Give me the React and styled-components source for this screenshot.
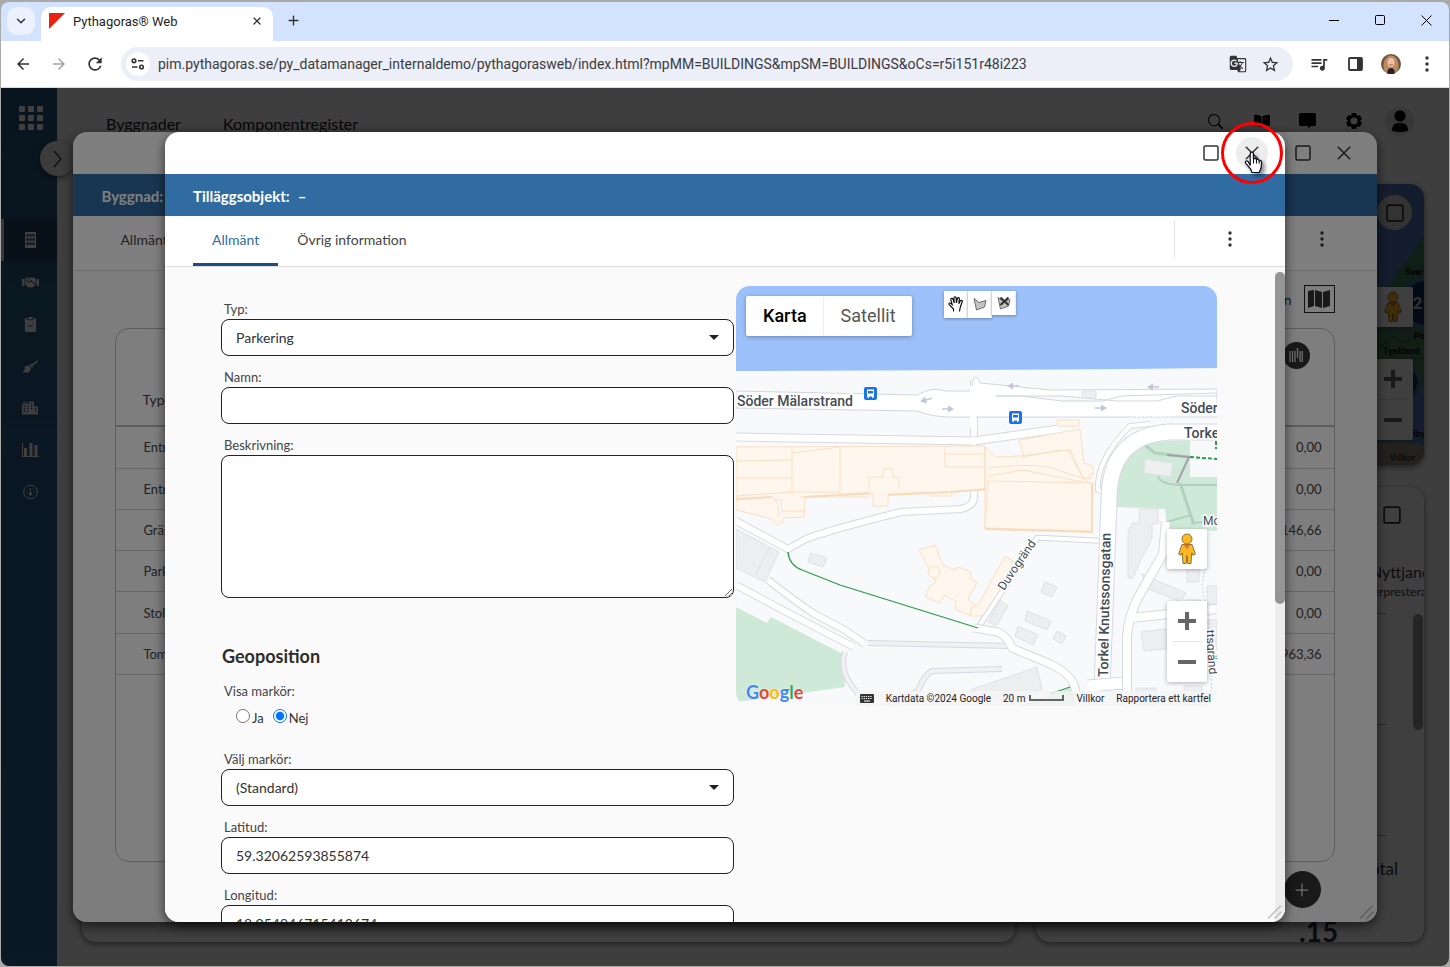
import { useState } from 'react';
import styled, { createGlobalStyle, css } from 'styled-components';
import { BsSearch, BsClipboard2CheckFill } from 'react-icons/bs';
import { FaBookOpen, FaBroom, FaCity, FaHandshake } from 'react-icons/fa';
import {
  MdArrowBack,
  MdArrowForward,
  MdGTranslate,
  MdQueueMusic,
  MdRefresh,
  MdStarBorder,
} from 'react-icons/md';
import { ChevronDown, Plus, X } from 'lucide-react';

const rows = [
  { type: 'Entré', amount: '0,00' },
  { type: 'Entré', amount: '0,00' },
  { type: 'Gräsmatta', amount: '2 146,66' },
  { type: 'Parkering', amount: '0,00' },
  { type: 'Stolpe', amount: '0,00' },
  { type: 'Tomt', amount: '4 963,36' },
];

const SquareIcon = ({ size = 16 }) => (
  <svg width={size} height={size} viewBox='0 0 16 16' fill='none' stroke='currentColor' strokeWidth='1.5'>
    <rect x='1' y='1' width='14' height='14' rx='1.5' />
  </svg>
);

const DotsIcon = () => (
  <svg width='4' height='16' viewBox='0 0 4 16' fill='currentColor'>
    <circle cx='2' cy='2' r='1.7' />
    <circle cx='2' cy='8' r='1.7' />
    <circle cx='2' cy='14' r='1.7' />
  </svg>
);

const CloseIcon = () => (
  <svg width='14' height='14' viewBox='0 0 14 14' fill='none' stroke='currentColor' strokeWidth='1.5'>
    <path d='M.8.8l12.4 12.4M13.2.8.8 13.2' />
  </svg>
);

const GearIcon = () => (
  <svg width='18' height='18' viewBox='0 0 18 18' fill='currentColor'>
    {[0, 60, 120].map((angle) => (
      <rect key={angle} x='6.500' y='1' width='5' height='16' rx='1' transform={`rotate(${angle} 9 9)`} />
    ))}
    <circle cx='9' cy='9' r='6.500' />
    <circle cx='9' cy='9' r='3.600' fill='#fafafa' />
  </svg>
);

const ChatIcon = () => (
  <svg width='18' height='16' viewBox='0 0 18 16' fill='currentColor'>
    <path d='M1.500 0h14q1.500 0 1.500 1.500v10q0 1.500-1.500 1.500h-3.500L9 15.500V13H1.500Q0 13 0 11.500v-10Q0 0 1.500 0z' />
  </svg>
);

const KeyboardIcon = () => (
  <svg width='14' height='9' viewBox='0 0 14 9'>
    <rect width='14' height='9' rx='1' fill='#333' />
    <path d='M1.500 2.500h11M1.500 4.500h11' stroke='#fff' strokeDasharray='1.200 1' />
    <path d='M4 7h6' stroke='#fff' />
  </svg>
);

const Grip = () => (
  <GripCorner width='14' height='14' viewBox='0 0 14 14' fill='none' stroke='#bdbdbd' strokeWidth='1.5'>
    <path d='M.5 13 12.5 1M7 13l6-6' strokeLinecap='round' />
  </GripCorner>
);

const Pegman = () => (
  <svg width='18' height='32' viewBox='0 0 18 32' stroke='#6d5b2c' strokeWidth='.8'>
    <path
      d='M4 11.5h10l3.4 9.5-2.4 1.2-1.2-2.2-.8 10.5H9.8L9 22.500l-.8 8H5L4.200 20 3 22.200.6 21z'
      fill='#fdb924'
    />
    <path d='M5.500 11.500h7L9 16.500z' fill='#e5752b' stroke='none' />
    <circle cx='9' cy='6' r='5' fill='#fdb924' />
  </svg>
);

const ZoomControl = () => (
  <ZoomBox>
    <ZoomButton aria-label='Zooma in'>
      <svg width='18' height='18' viewBox='0 0 18 18' fill='currentColor'>
        <path d='M7 0h4v7h7v4h-7v7H7v-7H0V7h7z' />
      </svg>
    </ZoomButton>
    <ZoomButton aria-label='Zooma ut'>
      <svg width='18' height='18' viewBox='0 0 18 18' fill='currentColor'>
        <path d='M0 7h18v4H0z' />
      </svg>
    </ZoomButton>
  </ZoomBox>
);

const BrowserChrome = () => (
  <>
    <TabStrip>
      <TabSearch aria-label='Sök bland flikar'>
        <ChevronDown size={14} strokeWidth={2.5} />
      </TabSearch>
      <BrowserTab>
        <svg width='16' height='16' viewBox='0 0 16 16'>
          <path d='M0 0h16L0 16z' fill='#ec2211' />
        </svg>
        <TabTitle>Pythagoras® Web</TabTitle>
        <ChromeButton $size={16} aria-label='Stäng flik'>
          <X size={12} strokeWidth={2.6} />
        </ChromeButton>
      </BrowserTab>
      <ChromeButton $size={28} aria-label='Ny flik'>
        <Plus size={15} strokeWidth={2.2} />
      </ChromeButton>
      <WindowButtons>
        <ChromeButton $size={46} aria-label='Minimera'>
          <svg width='10' height='10' stroke='#000'>
            <path d='M0 4.500h10' />
          </svg>
        </ChromeButton>
        <ChromeButton $size={46} aria-label='Maximera'>
          <svg width='11' height='11' stroke='#000' fill='none'>
            <rect x='.5' y='.5' width='9' height='9' rx='1' />
          </svg>
        </ChromeButton>
        <ChromeButton $size={46} aria-label='Stäng'>
          <svg width='11' height='11' stroke='#000'>
            <path d='M.5.5l10 10M10.500.5l-10 10' />
          </svg>
        </ChromeButton>
      </WindowButtons>
    </TabStrip>
    <AddressRow>
      <ChromeButton $size={36} aria-label='Tillbaka'>
        <MdArrowBack size={18} />
      </ChromeButton>
      <ChromeButton $size={36} $muted aria-label='Framåt'>
        <MdArrowForward size={18} />
      </ChromeButton>
      <ChromeButton $size={36} aria-label='Läs in igen'>
        <MdRefresh size={20} />
      </ChromeButton>
      <Omnibox>
        <SiteInfo aria-label='Webbplatsinformation'>
          <svg width='14' height='12' viewBox='0 0 14 12' fill='none' stroke='#333' strokeWidth='1.6'>
            <circle cx='3' cy='2.800' r='1.800' />
            <path d='M7 2.800h5.500M1 9h5.500' />
            <circle cx='10.500' cy='9' r='1.800' />
          </svg>
        </SiteInfo>
        <Url
          aria-label='Adressfält'
          defaultValue='pim.pythagoras.se/py_datamanager_internaldemo/pythagorasweb/index.html?mpMM=BUILDINGS&mpSM=BUILDINGS&oCs=r5i151r48i223'
        />
        <ChromeButton $size={32} aria-label='Översätt'>
          <MdGTranslate size={18} />
        </ChromeButton>
        <ChromeButton $size={32} aria-label='Bokmärk'>
          <MdStarBorder size={19} />
        </ChromeButton>
      </Omnibox>
      <ChromeButton $size={36} aria-label='Media'>
        <MdQueueMusic size={20} />
      </ChromeButton>
      <ChromeButton $size={36} aria-label='Sidopanel'>
        <svg width='15' height='14' viewBox='0 0 15 14'>
          <rect x='1' y='1' width='13' height='12' rx='1' fill='none' stroke='#333' strokeWidth='1.8' />
          <path d='M9 1h5v12H9z' fill='#333' />
        </svg>
      </ChromeButton>
      <ChromeButton $size={36} aria-label='Profil'>
        <svg width='20' height='20' viewBox='0 0 20 20'>
          <circle cx='10' cy='10' r='10' fill='#6f553f' />
          <path d='M3 16C1 8 5 1.500 10 1.500S19 8 17 16l-3 3H6z' fill='#b98d63' />
          <ellipse cx='10' cy='8.500' rx='3.400' ry='4.600' fill='#efc0a6' />
          <path d='M6.500 20q-1-6 3.500-6 4.500 0 3.500 6z' fill='#2b2225' />
          <path d='M8.300 10.500q1.700 1.400 3.400 0' stroke='#a85850' fill='none' />
        </svg>
      </ChromeButton>
      <ChromeButton $size={36} aria-label='Meny'>
        <DotsIcon />
      </ChromeButton>
    </AddressRow>
  </>
);

const SideMenu = () => (
  <Sidebar>
    <AppsButton aria-label='Appar'>
      <svg width='24' height='24' viewBox='0 0 24 24' fill='currentColor'>
        {[0, 9, 18].map((y) =>
          [0, 9, 18].map((x) => <rect key={`${x}-${y}`} x={x} y={y} width='6' height='6' rx='1' />)
        )}
      </svg>
    </AppsButton>
    <SideItem $active aria-label='Byggnader'>
      <svg width='11' height='16' viewBox='0 0 11 16' fill='currentColor'>
        <path
          fillRule='evenodd'
          d='M0 0h11v16H0zM1.500 2v2.500h2V2zm3 0v2.500h2V2zm3 0v2.500h2V2zm-6 4.300v2.500h2V6.300zm3 0v2.500h2V6.300zm3 0v2.500h2V6.300zm-6 4.200V13h2v-2.500zm3 0V13h2v-2.500zm3 0V13h2v-2.500z'
        />
      </svg>
    </SideItem>
    <SideItem aria-label='Avtal'>
      <FaHandshake size={17} />
    </SideItem>
    <SideItem aria-label='Uppgifter'>
      <BsClipboard2CheckFill size={15} />
    </SideItem>
    <SideItem aria-label='Städning'>
      <FaBroom size={15} />
    </SideItem>
    <SideItem aria-label='Fastigheter'>
      <FaCity size={16} />
    </SideItem>
    <SideItem aria-label='Statistik'>
      <svg width='17' height='14' viewBox='0 0 17 14' fill='currentColor'>
        <path d='M0 0h1v13h16v1H0zM2 5h3v8H2zM7.500 0h3v13h-3zM12.500 2h3v11h-3z' />
      </svg>
    </SideItem>
    <SideItem aria-label='Mätare'>
      <svg width='15' height='16' viewBox='0 0 15 16' fill='none' stroke='currentColor'>
        <circle cx='7.500' cy='8' r='6.800' />
        <path d='M7.500 4v6M3.500 8h1M10.500 8h1M4.500 5l.8.8M10.500 5l-.8.8' />
        <circle cx='7.500' cy='10' r='1.200' fill='currentColor' />
      </svg>
    </SideItem>
  </Sidebar>
);

const OverviewMap = () => (
  <OverviewCard>
    <OverviewDrawing viewBox='1036 184 388 281' preserveAspectRatio='xMaxYMin slice'>
      <path d='M1036 184h388v281h-388z' fill='#5277b8' />
      <path d='M1424 236l-8 8-8 16-10 10-8 14-16 10v60h50z' fill='#3f7a5c' />
      <path d='M1370 335l20-12 34 4v56l-20 32-10-16-24-6z' fill='#45785b' />
      <path d='M1370 443l30-2 24 4v20h-54z' fill='#8a8478' />
      <path d='M1380 346l14-9 10 6 20-12' fill='none' stroke='#234638' />
      <circle cx='1426' cy='303' r='24' fill='#0e3158' stroke='#3e6ca6' strokeWidth='4' />
      <circle cx='1404' cy='382' r='15' fill='#0e3158' stroke='#3e6ca6' strokeWidth='3' />
      <g fontFamily='Roboto, sans-serif' fontSize='9' fontWeight='700' fill='#0a0a0a'>
        <text x='1405' y='275'>Sver</text>
        <text x='1414' y='339'>Po</text>
        <text x='1383' y='354'>Tyskland</text>
        <text x='1408' y='437'>Liby</text>
      </g>
      <text x='1413' y='309' fontFamily='Roboto, sans-serif' fontSize='16' fontWeight='700' fill='#ccc'>2</text>
      <text x='1390' y='461' fontFamily='Roboto, sans-serif' fontSize='9' fill='#111'>Villkor</text>
    </OverviewDrawing>
    <RoundExpand aria-label='Maximera karta'>
      <SquareIcon size={18} />
    </RoundExpand>
    <OverviewControls>
      <PegButton aria-label='Street View'>
        <Pegman />
      </PegButton>
      <ZoomControl />
    </OverviewControls>
  </OverviewCard>
);

// casing first, then the white surface on top
const Road = ({ d, w = 7, fill = '#fff' }) => (
  <g fill='none' strokeLinejoin='round'>
    <path d={d} stroke='#d6d9e0' strokeWidth={w + 2} />
    <path d={d} stroke={fill} strokeWidth={w} />
  </g>
);

const BusStop = ({ x, y }) => (
  <g transform={`translate(${x} ${y})`}>
    <rect width='13' height='13' rx='2' fill='#1a73e8' />
    <path fillRule='evenodd' d='M3 2.500h7v7H9.500V11H8V9.500H5V11H3.500V9.500H3zM4 4v2.500h5V4z' fill='#fff' />
  </g>
);

const Arrow = ({ x, y, flip, angle = 0 }) => (
  <path
    transform={`translate(${x} ${y}) rotate(${angle}) scale(${flip ? -1 : 1} 1)`}
    d='M-6-.7h6V-3.500L6 0 0 3.500V.7h-6z'
    fill='#c3c6db'
  />
);

const StreetMap = () => (
  <MapDrawing viewBox='736 286 481 420' preserveAspectRatio='xMinYMin slice'>
    <path d='M736 286h481v420H736z' fill='#f8f9fb' />
    <path d='M736 286h481v82l-90 1-150 1-241 1z' fill='#9cc0f9' />

    <path d='M1117 507v-22q2-30 36-43l37-2v36l27 1v54l-50-2-2-20z' fill='#cfe9d8' />
    <path d='M1158 557l12-14v19zM1190 440h27v37h-27z' fill='#f8f9fb' />
    <path d='M736 607l31 16 4-6 72 37 2 33-109 15z' fill='#cfe9d8' />
    <path d='M1020 706l50-18 10-2-8 20z' fill='#cfe9d8' />

    <Road d='M736 521l52 28 18-10q20-8 95-27l60-3q14-3 13-14V380' w={6} />
    <Road d='M736 437l238 4 85-12' w={7} />
    <path d='M970 441h6' stroke='#fff' strokeWidth='7' />

    <g fill='#fff6ed' stroke='#fbdfc4'>
      <path d='M736 447l249-1 1 43-34 3v4h-22v-4l-42 2v12h-15v-12l-68 3-1 20h-22l-1-17-45-2z' />
      <path d='M736 500l36-3 6 7v12l5-5h21v6l-21 1v4l-6 3-5-6-36-9z' />
      <path d='M1019 440l61-11 4 34 9 3v8l-9 6-14-30-46 6z' />
      <path d='M985 447l11 10 24-1 48-6 16 30 9 4-1 48-107-3z' />
      <path d='M988 481l105 2-1 48-107-3z' />
      <path d='M919 550l16-5 8 20 12 5 3-3 13 5-1 6 7 5-9 16 9 8-8 8-14-6 1-8-12-6-4 8-15-6 5-11 6-4z' />
      <path d='M1005 556l8 5-22 50-9 5-12 0 1-8 7-3z' />
      <circle cx='934' cy='572' r='6' />
      <path d='M1057 420h22v6h-22z' />
    </g>
    <g fill='none' stroke='#fbdfc4'>
      <path d='M736 461l56-1M792 447v44M792 453l48-6M840 447v48M792 492l-56 4M945 447v20h40M945 454h40M985 447v42M736 478h56M788 492h52M869 489v-12h14v-8h10v8h6v12M800 497h70M940 492l46-2' />
      <path d='M988 468q50-6 70 2t34 9M988 476l35-6 60 12M1022 457l38-7' />
    </g>
    <path d='M736 499l36-2M804 497l66-4M888 495l64-3 34-3M985 529l107 3v-48' fill='none' stroke='#f7dcbc' strokeWidth='2' />

    <g fill='#edeef0' stroke='#dfe0e4'>
      <path d='M736 529l43 23-14 30-29-14zM770 547l-14 27' />
      <path d='M811 553l16 5-4 9-15-5zM1045 582l12 5-5 10-11-5zM1027 611l24 10-4 9-22-9zM1018 626l20 9-5 10-18-9zM1057 631l9 5-4 8-9-5zM1000 600l8 6-12 20-8-4z' />
      <path d='M1139 509h19v14l-6 1v14l-3 7-7 12-9 21h-5v-46l4-9h7zM1142 574l44 19-5 9h-4v-2l-32-12zM1187 569h12v13h-12zM1186 600h15v14h-15zM1207 586h10v18h-10zM1141 632l32-4v20l-29 3zM1208 620h9v30h-9z' />
      <path d='M1145 459l28 4-2 14-27-4zM970 690l67-23 5 22-40 12h-32zM1136 688h20v18h-20zM1184 686h18v20h-18z' />
    </g>
    <g fill='none' stroke='#b0d1be' strokeWidth='3'>
      <path d='M1137 439l18 14 35 4M1180 483l14 42' />
      <path d='M1158 476q2 8 20 9h39M1167 522l24-7M1191 523l15-1' strokeWidth='2' />
    </g>
    <path d='M1167 455l22 2-12 26' fill='none' stroke='#a79fac' strokeWidth='2' />

    <Road d='M868 643L1010 646M845 652Q836 678 872 706M890 704l28-13q6-16 14-20l70-2' w={4} fill='#f0f1f4' />
    <Road d='M736 585l56 30 62 32M768 580q28 22 48 35l29 15 20 14' w={6} />
    <Road d='M978 628l59-90h8l60 3' w={4} />
    <Road d='M974 628l24 4q10 5 14 16l36 15q22 10 26 22l6 21' w={7} />
    <Road d='M1127 706v-70q2-22 12-40l24-42 3-32M1131 618l86-9' w={8} />
    <Road d='M1150 424l-20 2q-34 34-32 64l6 2' w={4} />
    <Road d='M1217 432h-48q-60 4-60 68l-7 190' w={15} />
    <Road d='M1088 686l34-3' w={11} />
    <path
      d='M736 391l181 4q16-9 28-4l27 0 1-11q3-6 6 0l1 3 70 7 167-1v7l-40 0-20 5h-40l-55-5h-66 25l41 5h40l20-5 95-3v24H960q-26 1-43-6l-181-3z'
      fill='#fff'
      stroke='#d3d6df'
    />
    <path d='M973 386v42' stroke='#fff' strokeWidth='6' />
    <path d='M1082 391h14v7h-14z' fill='#edeef0' stroke='#dfe0e4' />
    <path d='M1206 568q-8 20 2 40l4 90' fill='none' stroke='#c9ccd2' strokeDasharray='2 2' />
    <path d='M1132 416h38' stroke='#fff' strokeWidth='2' strokeDasharray='2 2' />

    <g fill='none' stroke='#2a9b4a' strokeWidth='1.300'>
      <path d='M788 552q1 13 14 18l38 15 138 43' />
      <path d='M1190 457l27 2M1216 441v8' strokeDasharray='4 2' strokeWidth='2' />
      <path d='M1050 694l20-7' />
    </g>
    <Arrow x={926} y={400} flip angle={-15} />
    <Arrow x={948} y={409} />
    <Arrow x={1013} y={386} flip />
    <Arrow x={1153} y={387} flip />
    <Arrow x={1101} y={408} />
    <BusStop x={864} y={387} />
    <BusStop x={1009} y={411} />

    <g
      fontFamily='Roboto, sans-serif'
      fontSize='14'
      fontWeight='500'
      fill='#454c55'
      stroke='#fff'
      strokeWidth='3'
      paintOrder='stroke'
    >
      <text x='737' y='406'>Söder Mälarstrand</text>
      <text x='1181' y='413'>Söder</text>
      <text x='1184' y='438'>Torke</text>
      <text transform='translate(1108 677) rotate(-89)'>Torkel Knutssonsgatan</text>
      <text transform='translate(1004 591) rotate(-56)' fontSize='12' fontWeight='400'>Duvogränd</text>
      <text transform='translate(1206 630) rotate(86)' fontSize='12' fontWeight='400'>ttsgränd</text>
      <text x='1203' y='525' fontSize='12' fontWeight='400'>Mo</text>
    </g>
  </MapDrawing>
);

const LocationMap = () => (
  <MapPanel>
    <StreetMap />
    <MapTypes>
      <MapType $active>Karta</MapType>
      <MapType>Satellit</MapType>
    </MapTypes>
    <DrawTools>
      <DrawTool aria-label='Panorera'>
        <svg width='16' height='16' viewBox='0 0 16 16' fill='#fff' stroke='#000' strokeWidth='1.100'>
          <path d='M5.500 15.500V13L1.200 8.600C.2 7.200 1.800 6.400 3 7.600l1.200 1L2.800 3.600C2.600 2 4.400 1.700 5 3.200L6.200 7 6 1.900C6 .4 8 .3 8.100 1.800L8.400 7l1-4.600c.4-1.300 2.200-1 2 .5l-.6 4.700 1.700-2.800c.8-1.100 2.300-.3 1.700 1L12.200 11.500 11.500 15.500' />
        </svg>
      </DrawTool>
      <DrawTool aria-label='Rita yta'>
        <svg width='14' height='14' viewBox='0 0 14 14' fill='#c4c4c4' stroke='#6b6b6b'>
          <path d='M1 1.500l5 4 7-2-1.500 6.500-8 3z' />
        </svg>
      </DrawTool>
      <DrawTool $short aria-label='Ta bort yta'>
        <svg width='14' height='14' viewBox='0 0 14 14' fill='#c4c4c4' stroke='#6b6b6b'>
          <path d='M1 1.500l5 4 7-2-1.500 6.500-8 3z' />
          <path d='M3.500 1.500l8 7.500M11.500 1.500l-8 7.500' stroke='#333' strokeWidth='2.200' />
        </svg>
      </DrawTool>
    </DrawTools>
    <MapControls>
      <PegButton aria-label='Street View'>
        <Pegman />
      </PegButton>
      <ZoomControl />
    </MapControls>
    <GoogleMark href='#google' aria-label='Google'>
      <Letter $color='#4285f4'>G</Letter>
      <Letter $color='#ea4335'>o</Letter>
      <Letter $color='#fbbc04'>o</Letter>
      <Letter $color='#4285f4'>g</Letter>
      <Letter $color='#34a853'>l</Letter>
      <Letter $color='#ea4335'>e</Letter>
    </GoogleMark>
    <Attribution>
      <KeyboardIcon />
      <span>Kartdata ©2024 Google</span>
      <Scale>
        20 m <ScaleBar />
      </Scale>
      <MapLink href='#villkor'>Villkor</MapLink>
      <MapLink href='#kartfel'>Rapportera ett kartfel</MapLink>
    </Attribution>
  </MapPanel>
);

const TextField = ({ id, label, value }) => (
  <>
    <Label htmlFor={id}>{label}</Label>
    <Input id={id} defaultValue={value} />
  </>
);

const SelectField = ({ id, label, value }) => (
  <>
    <Label htmlFor={id}>{label}</Label>
    <SelectWrap>
      <Select id={id} defaultValue={value}>
        <option>{value}</option>
      </Select>
      <Caret width='10' height='5' viewBox='0 0 10 5'>
        <path d='M0 0h10L5 5z' fill='#222' />
      </Caret>
    </SelectWrap>
  </>
);

const ObjectForm = () => {
  const [marker, setMarker] = useState('nej');

  return (
    <Form>
      <SelectField id='typ' label='Typ:' value='Parkering' />
      <TextField id='namn' label='Namn:' value='' />
      <Label htmlFor='beskrivning'>Beskrivning:</Label>
      <TextArea id='beskrivning' />
      <SectionTitle>Geoposition</SectionTitle>
      <Label as='div'>Visa markör:</Label>
      <RadioRow>
        <RadioLabel>
          <Radio name='marker' checked={marker === 'ja'} onChange={() => setMarker('ja')} />
          Ja
        </RadioLabel>
        <RadioLabel>
          <Radio name='marker' checked={marker === 'nej'} onChange={() => setMarker('nej')} />
          Nej
        </RadioLabel>
      </RadioRow>
      <SelectField id='markor' label='Välj markör:' value='(Standard)' />
      <TextField id='lat' label='Latitud:' value='59.32062593855874' />
      <TextField id='long' label='Longitud:' value='18.054946715412674' />
    </Form>
  );
};

const BuildingDialog = () => (
  <Dialog $width='90%'>
    <TitleBar>
      <IconButton aria-label='Maximera'>
        <SquareIcon />
      </IconButton>
      <IconButton aria-label='Stäng'>
        <CloseIcon />
      </IconButton>
    </TitleBar>
    <DialogHeading>Byggnad:</DialogHeading>
    <DialogTabs $tall>
      <DialogTab>Allmänt</DialogTab>
      <MoreButton aria-label='Fler val'>
        <DotsIcon />
      </MoreButton>
    </DialogTabs>
    <TableBody>
      <TableTools>
        Visa tilläggsobjekt på kartan
        <MapToggle aria-label='Karta'>
          <svg width='22' height='18' viewBox='0 0 22 18' fill='currentColor'>
            <path d='M0 1l6-1v16l-6 2zM7 0l7 2v16l-7-2zM15 2l7-2v16l-7 2z' />
          </svg>
        </MapToggle>
      </TableTools>
      <TableCard>
        <ColumnsButton aria-label='Kolumner'>
          <svg width='14' height='16' viewBox='0 0 14 16' stroke='currentColor' strokeWidth='1.300'>
            <path d='M1 4v11M3.500 4v11M6 4v11M8.500 1v10M11 4v11M13.200 4v11' />
          </svg>
        </ColumnsButton>
        <Table>
          <thead>
            <tr>
              <Th>Typ</Th>
              <Th />
            </tr>
          </thead>
          <tbody>
            {rows.map((row, i) => (
              <tr key={i}>
                <Td>{row.type}</Td>
                <Td $right>{row.amount}</Td>
              </tr>
            ))}
          </tbody>
        </Table>
      </TableCard>
      <AddButton aria-label='Lägg till'>
        <Plus size={20} strokeWidth={1.5} />
      </AddButton>
    </TableBody>
    <Grip />
  </Dialog>
);

const ObjectDialog = () => (
  <Dialog $width='calc(100% - 328px)'>
    <TitleBar>
      <IconButton aria-label='Maximera'>
        <SquareIcon />
      </IconButton>
      <CloseSpot>
        <IconButton $hovered aria-label='Stäng'>
          <CloseIcon />
        </IconButton>
        <Highlight />
        <Pointer width='24' height='28' viewBox='0 0 24 28'>
          <path
            d='M6.200 14.500V3c0-2.400 3.200-2.400 3.200 0v5.200c.6-1.200 2.800-1 3 .6.900-1 2.700-.6 2.800 1 1-.8 2.600 0 2.400 1.800l-.6 5.400-1.800 4.500H8l-1.500-3.600-4.700-5.400c-1.400-2 .8-3.600 2.400-1.800z'
            fill='#fff'
            stroke='#0b0b1c'
            strokeWidth='1.200'
          />
          <path d='M9.500 8v4.500M12.500 8.800v3.700M15.200 9.800v3' stroke='#0b0b1c' />
        </Pointer>
      </CloseSpot>
    </TitleBar>
    <DialogHeading>
      Tilläggsobjekt: <span>–</span>
    </DialogHeading>
    <DialogTabs>
      <DialogTab $active>Allmänt</DialogTab>
      <DialogTab>Övrig information</DialogTab>
      <MoreButton $divided aria-label='Fler val'>
        <DotsIcon />
      </MoreButton>
    </DialogTabs>
    <FormBody>
      <ObjectForm />
      <LocationMap />
      <ScrollTrack>
        <ScrollThumb $share={51} />
      </ScrollTrack>
    </FormBody>
    <Grip />
  </Dialog>
);

const App = () => (
  <BrowserWindow>
    <GlobalStyle />
    <BrowserChrome />
    <Viewport>
      <SideMenu />
      <PageColumn>
        <PageHeader>
          <PageLink href='#byggnader'>Byggnader</PageLink>
          <PageLink href='#komponenter'>Komponentregister</PageLink>
          <HeaderIcons>
            <HeaderButton aria-label='Sök'>
              <BsSearch size={15} />
            </HeaderButton>
            <HeaderButton aria-label='Handbok'>
              <FaBookOpen size={16} />
            </HeaderButton>
            <HeaderButton aria-label='Meddelanden'>
              <ChatIcon />
            </HeaderButton>
            <HeaderButton aria-label='Inställningar'>
              <GearIcon />
            </HeaderButton>
            <HeaderButton $round aria-label='Konto'>
              <svg width='16' height='22' viewBox='0 0 16 22' fill='currentColor'>
                <circle cx='8' cy='6' r='5.700' />
                <path d='M0 21q0-9 8-8 8-1 8 8-8 2-16 0z' />
              </svg>
            </HeaderButton>
          </HeaderIcons>
        </PageHeader>
        <Dashboard>
          <Card />
          <SideCards>
            <OverviewMap />
            <FactsCard>
              <FactsExpand aria-label='Maximera'>
                <SquareIcon size={18} />
              </FactsExpand>
              <FactTitle>Nyttjande</FactTitle>
              <FactNote>perpresterad</FactNote>
              <FactRow />
              <FactRow />
              <FactRow>Total</FactRow>
              <FactTotal>.15</FactTotal>
              <FactsScroll />
            </FactsCard>
          </SideCards>
        </Dashboard>
      </PageColumn>
      <ExpandButton aria-label='Visa meny'>
        <svg width='9' height='18' viewBox='0 0 9 18' fill='none' stroke='currentColor' strokeWidth='1.200'>
          <path d='M1 1l7 8-7 8' />
        </svg>
      </ExpandButton>
      <Backdrop>
        <BuildingDialog />
      </Backdrop>
      <Backdrop>
        <ObjectDialog />
      </Backdrop>
    </Viewport>
  </BrowserWindow>
);

export default App;

const uiFont = `'Lato', 'Open Sans', sans-serif`;

const GlobalStyle = createGlobalStyle`
  *, *::before, *::after {
    box-sizing: border-box;
  }

  body {
    margin: 0;
    background: #a9aaa8;
    font-family: ${uiFont};
    font-size: 14px;
    color: #333;
  }

  button {
    display: flex;
    align-items: center;
    justify-content: center;
    padding: 0;
    border: 0;
    background: none;
    color: inherit;
    font: inherit;
    cursor: pointer;
  }

  a {
    color: inherit;
    text-decoration: none;
  }

  svg {
    flex: none;
  }
`;

const BrowserWindow = styled.div`
  display: flex;
  flex-direction: column;
  height: 100vh;
  padding: 2px 1px 1px;
`;

const TabStrip = styled.div`
  display: flex;
  align-items: center;
  flex: none;
  height: 39px;
  padding: 0 0 2px 6px;
  border-radius: 8px 8px 0 0;
  background: #d3e2fd;
`;

const ChromeButton = styled.button`
  flex: none;
  width: ${({ $size }) => $size}px;
  height: ${({ $size }) => Math.min($size, 36)}px;
  color: ${({ $muted }) => ($muted ? '#a3a5a8' : '#333')};
`;

const TabSearch = styled(ChromeButton).attrs({ $size: 28 })`
  border-radius: 10px;
  background: #ebf1fe;
`;

const BrowserTab = styled.div`
  display: flex;
  align-items: center;
  align-self: flex-end;
  width: 232px;
  height: 34px;
  margin: 0 6px -2px;
  padding: 0 8px 6px;
  border-radius: 10px 10px 0 0;
  background: #fff;
`;

const TabTitle = styled.span`
  flex: 1;
  margin-left: 8px;
  font-family: Roboto, sans-serif;
  font-size: 13px;
  color: #1f1f1f;
`;

const WindowButtons = styled.div`
  display: flex;
  margin-left: auto;
`;

const AddressRow = styled.div`
  display: flex;
  align-items: center;
  flex: none;
  height: 47px;
  padding: 0 4px;
  border-bottom: 1px solid #dcdcdc;
  background: #fff;
`;

const Omnibox = styled.div`
  display: flex;
  align-items: center;
  flex: 1;
  height: 34px;
  margin: 0 8px;
  padding: 0 7px 0 5px;
  border-radius: 17px;
  background: #eceef8;
`;

const SiteInfo = styled(ChromeButton).attrs({ $size: 24 })`
  border-radius: 50%;
  background: #fff;
`;

const Url = styled.input`
  flex: 1;
  min-width: 0;
  padding: 0 8px;
  border: 0;
  background: none;
  font-family: Roboto, sans-serif;
  font-size: 14px;
  color: #3a3c40;
`;

const Viewport = styled.div`
  position: relative;
  display: flex;
  flex: 1;
  min-height: 0;
  overflow: hidden;
  border-radius: 0 0 8px 8px;
  background: #fafafa;
`;

const Backdrop = styled.div`
  position: absolute;
  inset: 0;
  display: flex;
  align-items: center;
  justify-content: center;
  background: rgba(0, 0, 0, 0.5);
`;

const Sidebar = styled.nav`
  display: flex;
  flex-direction: column;
  flex: none;
  width: 56px;
  background: linear-gradient(#245678, #2a608c 40%, #225c8a 60%, #2a6494);
  color: #fff;
`;

const AppsButton = styled.button`
  width: 24px;
  height: 24px;
  margin: 18px 18px 89px;
`;

const SideItem = styled.button`
  height: 42px;
  padding-right: 1px;
  border-left: 3px solid ${({ $active }) => ($active ? '#e0e0e0' : 'transparent')};
  background: ${({ $active }) => ($active ? '#1c3f60' : 'none')};
`;

const ExpandButton = styled.button`
  position: absolute;
  top: 53px;
  left: 39px;
  width: 35px;
  height: 35px;
  border-radius: 50%;
  background: #f3f3f3;
  box-shadow: 0 2px 6px rgba(0, 0, 0, 0.5);
`;

const PageColumn = styled.div`
  display: flex;
  flex-direction: column;
  flex: 1;
  min-width: 0;
`;

const PageHeader = styled.header`
  display: flex;
  align-items: center;
  flex: none;
  gap: 42px;
  height: 70px;
  padding: 0 35px 0 49px;
  font-size: 16px;
`;

const PageLink = styled.a`
  color: #1c1c1c;
`;

const HeaderIcons = styled.div`
  display: flex;
  align-items: center;
  gap: 17px;
  margin: 0 0 4px auto;
  color: #000;
`;

const HeaderButton = styled.button`
  width: 29px;
  height: 29px;

  ${({ $round }) =>
    $round &&
    css`
      border-radius: 50%;
      background: #dcdcdc;
    `}
`;

const Dashboard = styled.main`
  display: grid;
  grid-template-columns: 1fr 388px;
  gap: 21px;
  flex: 1;
  min-height: 0;
  padding: 26px 25px 24px;
`;

const Card = styled.section`
  overflow: hidden;
  border-radius: 14px;
  background: #fff;
  box-shadow: 0 2px 6px rgba(0, 0, 0, 0.5);
`;

const SideCards = styled.div`
  display: flex;
  flex-direction: column;
  gap: 22px;
  min-height: 0;
`;

const OverviewCard = styled(Card)`
  position: relative;
  flex: none;
  height: 281px;
`;

const OverviewDrawing = styled.svg`
  width: 100%;
  height: 100%;
`;

const RoundExpand = styled.button`
  position: absolute;
  top: 11px;
  right: 12px;
  width: 35px;
  height: 35px;
  border-radius: 50%;
  background: #cfcfcf;
`;

const OverviewControls = styled.div`
  position: absolute;
  top: 103px;
  right: 11px;
`;

const FactsCard = styled(Card)`
  position: relative;
  flex: 1;
  min-height: 0;
  padding: 19px 0 0 24px;
  white-space: nowrap;
`;

const FactsExpand = styled.button`
  width: 18px;
  height: 18px;
  margin: 0 23px 38px auto;
`;

const FactTitle = styled.h3`
  margin: 0;
  padding-left: 310px;
  font-size: 16px;
  line-height: 20px;
  font-weight: 400;
`;

const FactNote = styled.p`
  margin: 0 0 11px;
  padding-left: 306px;
  font-size: 12px;
  line-height: 20px;
`;

const FactRow = styled.div`
  height: 111px;
  margin-right: 38px;
  padding-left: 302px;
  border-top: 1px solid #aaa;
  font-size: 17px;
  line-height: 66px;
`;

const FactTotal = styled.strong`
  display: block;
  margin-top: -30px;
  padding-left: 239px;
  font-size: 28px;
  line-height: 30px;
`;

const FactsScroll = styled.div`
  position: absolute;
  top: 127px;
  right: 1px;
  width: 10px;
  height: 116px;
  border-radius: 5px;
  background: #959595;
`;

const Dialog = styled.section`
  position: relative;
  display: flex;
  flex-direction: column;
  width: ${({ $width }) => $width};
  height: 90%;
  border-radius: 14px;
  background: #fff;
  box-shadow: 0 4px 12px rgba(0, 0, 0, 0.6);
`;

const TitleBar = styled.div`
  display: flex;
  align-items: center;
  justify-content: flex-end;
  gap: 9px;
  flex: none;
  height: 42px;
  padding-right: 17px;
`;

const IconButton = styled.button`
  width: 32px;
  height: 32px;
  border-radius: 50%;
  background: ${({ $hovered }) => ($hovered ? '#ededed' : 'none')};
`;

const CloseSpot = styled.div`
  position: relative;
`;

const Highlight = styled.span`
  position: absolute;
  inset: -15px;
  border: 3px solid #f00;
  border-radius: 50%;
  pointer-events: none;
`;

const Pointer = styled.svg`
  position: absolute;
  top: 14px;
  left: 8px;
  filter: drop-shadow(3px 3px 2px rgba(0, 0, 0, 0.45));
  pointer-events: none;
`;

const DialogHeading = styled.h2`
  display: flex;
  align-items: center;
  gap: 8px;
  flex: none;
  height: 42px;
  margin: 0;
  padding: 2px 28px 0;
  background: #306ba2;
  color: #fff;
  font-size: 15px;
  font-weight: 700;
`;

const DialogTabs = styled.div`
  display: flex;
  flex: none;
  height: ${({ $tall }) => ($tall ? 55 : 51)}px;
  padding: 0 28px;
  border-bottom: 1px solid #dcdcdc;
`;

const DialogTab = styled.button`
  height: 50px;
  padding: 0 19px;
  border-bottom: 3px solid ${({ $active }) => ($active ? '#1d4e80' : 'transparent')};
  color: ${({ $active }) => ($active ? '#306ba2' : '#444')};
  font-size: 14px;
`;

const MoreButton = styled.button`
  width: 54px;
  height: 38px;
  margin: 4px 0 0 auto;
  ${({ $divided }) =>
    $divided &&
    css`
      width: 83px;
      padding-left: 27px;
      border-left: 1px solid #e4e4e4;
    `}
`;

const GripCorner = styled.svg`
  position: absolute;
  right: 3px;
  bottom: 3px;
`;

const TableBody = styled.div`
  display: flex;
  flex-direction: column;
  flex: 1;
  min-height: 0;
  padding: 14px 42px 0;
  border-radius: 0 0 14px 14px;
  background: #fafafa;
`;

const TableTools = styled.div`
  display: flex;
  align-items: center;
  justify-content: flex-end;
  gap: 12px;
  flex: none;
  height: 29px;
  margin-bottom: 14px;
`;

const MapToggle = styled.button`
  width: 31px;
  height: 28px;
  border: 1px solid #222;
`;

const TableCard = styled.div`
  position: relative;
  flex: 1;
  min-height: 0;
  overflow: hidden;
  border: 1px solid #bbb;
  border-radius: 14px;
  background: #fdfdfd;
`;

const ColumnsButton = styled.button`
  position: absolute;
  top: 13px;
  right: 24px;
  width: 27px;
  height: 27px;
  border-radius: 50%;
  background: #333;
  color: #ddd;
`;

const Table = styled.table`
  width: 100%;
  height: 346px;
  border-collapse: collapse;
`;

const Th = styled.th`
  height: 97px;
  padding: 46px 12px 0 26px;
  border-bottom: 2px solid #bbb;
  font-size: 14px;
  font-weight: 400;
  text-align: left;
  color: #444;
`;

const Td = styled.td`
  padding: 0 12px 0 27px;
  border-bottom: 1px solid #ccc;
  font-size: 13px;
  text-align: ${({ $right }) => ($right ? 'right' : 'left')};
  color: #444;
`;

const AddButton = styled.button`
  flex: none;
  width: 37px;
  height: 37px;
  margin: 9px 14px 14px auto;
  border-radius: 50%;
  background: #333;
  color: #ddd;
`;

const FormBody = styled.div`
  position: relative;
  display: grid;
  grid-template-columns: 16fr 15fr;
  gap: 2px;
  flex: 1;
  min-height: 0;
  overflow: hidden;
  padding: 19px 68px 0 56px;
  border-radius: 0 0 14px 14px;
  background: #fafafa;
`;

const ScrollTrack = styled.div`
  position: absolute;
  top: 5px;
  right: 0;
  bottom: 0;
  width: 10px;
  background: #ededed;
`;

const ScrollThumb = styled.div`
  height: ${({ $share }) => $share}%;
  border-radius: 5px;
  background: #959595;
`;

const Form = styled.form`
  padding-top: 2px;
`;

const Label = styled.label`
  display: block;
  padding: 13px 0 1px 3px;
  font-size: 13px;
  line-height: 17px;
  color: #444;
`;

const fieldStyle = css`
  display: block;
  width: 100%;
  height: 37px;
  padding: 0 14px;
  border: 1px solid #222;
  border-radius: 8px;
  background: #fefefe;
  font-family: inherit;
  font-size: 14px;
  color: #333;
`;

const Input = styled.input`
  ${fieldStyle}
`;

const Select = styled.select`
  ${fieldStyle}
  appearance: none;
`;

const SelectWrap = styled.div`
  position: relative;
`;

const Caret = styled.svg`
  position: absolute;
  top: 16px;
  right: 15px;
  pointer-events: none;
`;

const TextArea = styled.textarea`
  ${fieldStyle}
  height: 143px;
  padding: 10px 14px;
  resize: vertical;
`;

const SectionTitle = styled.h3`
  margin: 46px 0 2px 1px;
  font-size: 18px;
  line-height: 24px;
  font-weight: 700;
  color: #2c2c2c;
`;

const RadioRow = styled.div`
  display: flex;
  gap: 9px;
  height: 37px;
  padding: 8px 0 0 15px;
`;

const RadioLabel = styled.label`
  display: flex;
  align-items: baseline;
  gap: 2px;
  height: 18px;
  font-size: 13px;
`;

const Radio = styled.input.attrs({ type: 'radio' })`
  width: 14px;
  height: 14px;
  margin: 0;
`;

const MapPanel = styled.div`
  position: relative;
  height: 420px;
  overflow: hidden;
  border-radius: 14px;
`;

const MapDrawing = styled.svg`
  display: block;
  width: 100%;
  height: 100%;
`;

const MapTypes = styled.div`
  position: absolute;
  top: 10px;
  left: 10px;
  display: flex;
  border-radius: 2px;
  background: #fff;
  box-shadow: 0 1px 4px rgba(0, 0, 0, 0.3);
`;

const MapType = styled.button`
  height: 40px;
  padding: 0 16px 0 17px;
  border-right: 1px solid #eee;
  font-family: Roboto, sans-serif;
  font-size: 18px;
  font-weight: ${({ $active }) => ($active ? 500 : 400)};
  color: ${({ $active }) => ($active ? '#000' : '#565656')};

  &:last-child {
    border-right: 0;
  }
`;

const DrawTools = styled.div`
  position: absolute;
  top: 5px;
  left: 208px;
  display: flex;
  align-items: flex-start;
`;

const DrawTool = styled.button`
  width: 24px;
  height: ${({ $short }) => ($short ? 24 : 27)}px;
  border-right: 1px solid #eee;
  background: #fff;
  box-shadow: 0 1px 3px rgba(0, 0, 0, 0.3);
`;

const MapControls = styled.div`
  position: absolute;
  right: 10px;
  bottom: 24px;
`;

const PegButton = styled.button`
  width: 40px;
  height: 40px;
  margin-bottom: 32px;
  border-radius: 2px;
  background: #fff;
  box-shadow: 0 1px 4px rgba(0, 0, 0, 0.3);
`;

const ZoomBox = styled.div`
  width: 40px;
  border-radius: 2px;
  background: #fff;
  box-shadow: 0 1px 4px rgba(0, 0, 0, 0.3);
`;

const ZoomButton = styled.button`
  width: 30px;
  height: 40px;
  margin: 0 5px;
  color: #666;

  & + & {
    height: 41px;
    border-top: 1px solid #e6e6e6;
  }
`;

const GoogleMark = styled.a`
  position: absolute;
  bottom: 4px;
  left: 10px;
  font-family: Lato, sans-serif;
  font-size: 18px;
  line-height: 20px;
  font-weight: 700;
  text-shadow: 0 0 2px #fff;
`;

const Letter = styled.span`
  color: ${({ $color }) => $color};
`;

const Attribution = styled.div`
  position: absolute;
  right: 0;
  bottom: 0;
  display: flex;
  align-items: center;
  gap: 12px;
  height: 15px;
  padding: 0 6px 0 4px;
  background: rgba(245, 245, 245, 0.8);
  font-family: Roboto, sans-serif;
  font-size: 10px;
  color: #222;
`;

const Scale = styled.span`
  display: flex;
  align-items: center;
  gap: 4px;
`;

const ScaleBar = styled.i`
  width: 35px;
  height: 6px;
  border: 2px solid #666;
  border-top: 0;
`;

const MapLink = styled.a`
  color: #222;
`;
